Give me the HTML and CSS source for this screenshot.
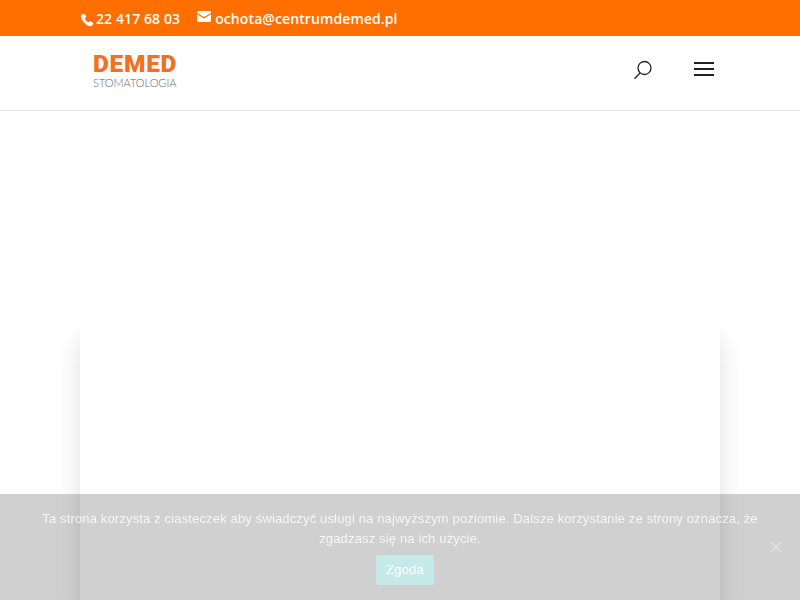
FILE: index.html
```html
<!doctype html>
<html lang="pl">
<head>
  <meta charset="utf-8">
  <title>DEMED Stomatologia</title>
  <link rel="stylesheet" href="styles.css">
</head>
<body>

  <div class="top-bar">
    <div class="container top-info">
      <a class="top-link" href="#">
        <svg class="top-icon phone-icon" viewBox="0 0 24 24"><path d="M6.2 1.5 2.6 3.2C1.5 4 1.3 5.600 1.800 7.300 3.600 13.800 9.500 20.300 15.800 22.300 17.800 22.900 19.300 22.700 20.300 21.700L22.500 18.800C23 18 22.800 17.400 22.100 16.900L18.100 14.200C17.400 13.700 16.700 13.900 16.200 14.400L14.800 15.900C14.400 16.300 13.900 16.300 13.400 16 11.300 14.400 9.600 12.400 8.400 10 8.100 9.500 8.200 9 8.600 8.600L10.100 7.300C10.700 6.800 10.800 6.100 10.500 5.400L8.300 2.100C7.800 1.300 7 1.100 6.200 1.500Z"/></svg>
        <span>22 417 68 03</span>
      </a>
      <a class="top-link" href="#">
        <svg class="top-icon mail-icon" viewBox="0 0 14 11"><path d="M0 1.200C0 .5.500 0 1.200 0H12.800C13.500 0 14 .5 14 1.200V1.900L7 6 0 1.900Z"/><path d="M0 3.300 7 7.400 14 3.300V9.800C14 10.500 13.500 11 12.800 11H1.200C.5 11 0 10.500 0 9.800Z"/></svg>
        <span>ochota@centrumdemed.pl</span>
      </a>
    </div>
  </div>

  <header class="main-header">
    <div class="container header-row">
      <a class="logo" href="#">
        <span class="logo-name">DEMED</span>
        <span class="logo-sub">STOMATOLOGIA</span>
      </a>
      <div class="header-tools">
        <svg class="search-icon" viewBox="0 0 20 20"><circle cx="11.500" cy="8" r="6.500"/><path d="M7 13 1.500 18.700"/></svg>
        <div class="burger"><span></span><span></span><span></span></div>
      </div>
    </div>
  </header>

  <main class="page-body">
    <div class="container content-card"></div>
  </main>

  <div class="cookie-notice">
    <p class="cookie-text">Ta strona korzysta z ciasteczek aby świadczyć usługi na najwyższym poziomie. Dalsze korzystanie ze strony oznacza, że zgadzasz się na ich użycie.</p>
    <a class="cookie-btn" href="#">Zgoda</a>
    <svg class="cookie-close" viewBox="0 0 12 12"><path d="M1 1 11 11M11 1 1 11"/></svg>
  </div>

</body>
</html>
```

FILE: styles.css
```css
html, body {
  margin: 0;
  padding: 0;
  height: 100%;
  overflow: hidden;
}
body {
  font-family: "Open Sans", Arial, sans-serif;
  background: #fff;
}
a {
  text-decoration: none;
  color: inherit;
}
.container {
  width: 640px;
  margin: 0 auto;
}
.top-bar {
  height: 36px;
  background: #ff6f00;
  color: #fff;
}
.top-info {
  display: flex;
  align-items: center;
  gap: 17px;
  height: 37px;
  font-size: 14px;
  font-weight: 600;
  letter-spacing: 0.1px;
}
.top-link {
  display: flex;
  align-items: center;
}
.top-icon {
  fill: #fff;
}
.phone-icon {
  width: 14px;
  height: 14px;
  margin: 2px 2px 0 0;
}
.mail-icon {
  width: 14px;
  height: 11px;
  margin: 0 4px 4px 0;
}
.main-header {
  height: 74px;
  border-bottom: 1px solid #e5e5e5;
}
.header-row {
  display: flex;
  justify-content: space-between;
  align-items: flex-start;
}
.logo {
  display: flex;
  flex-direction: column;
  margin: 17px 0 0 13px;
  width: 84px;
}
.logo-name {
  font-family: Roboto, Arial, sans-serif;
  font-weight: 900;
  font-size: 24.5px;
  line-height: 21px;
  letter-spacing: 0.7px;
  color: #f37021;
}
.logo-sub {
  font-family: Lato, Arial, sans-serif;
  font-weight: 300;
  font-size: 11px;
  line-height: 12px;
  color: #666;
  margin-top: 3px;
  white-space: nowrap;
}
.header-tools {
  display: flex;
  align-items: flex-start;
  gap: 41px;
  margin: 24px 6px 0 0;
}
.search-icon {
  width: 20px;
  height: 20px;
  fill: none;
  stroke: #222;
  stroke-width: 1.300;
}
.burger {
  display: flex;
  flex-direction: column;
  gap: 4px;
  width: 20px;
  margin-top: 2px;
}
.burger span {
  height: 2px;
  background: #222;
}
.page-body {
  height: 489px;
  padding-top: 210px;
  box-sizing: border-box;
}
.content-card {
  height: 279px;
  background: #fff;
  box-shadow: 0 18px 24px 0 rgba(0, 0, 0, 0.13);
}
.cookie-notice {
  position: fixed;
  left: 0;
  right: 0;
  bottom: 0;
  height: 106px;
  box-sizing: border-box;
  padding-top: 15px;
  background: rgba(50, 50, 58, 0.23);
  color: rgba(255, 255, 255, 0.8);
  font-family: "Liberation Sans", Arial, sans-serif;
  font-size: 13px;
  letter-spacing: 0.15px;
  text-align: center;
}
.cookie-text {
  margin: 0 auto;
  width: 740px;
  line-height: 20px;
}
.cookie-btn {
  display: inline-block;
  margin: 6px 0 0 10px;
  padding: 0 10.5px;
  height: 30px;
  line-height: 30px;
  border-radius: 2px;
  background: #c6eae9;
  color: #fff;
}
.cookie-close {
  position: absolute;
  right: 18px;
  top: 47px;
  width: 12px;
  height: 12px;
  fill: none;
  stroke: rgba(255, 255, 255, 0.35);
  stroke-width: 1.500;
}
```
